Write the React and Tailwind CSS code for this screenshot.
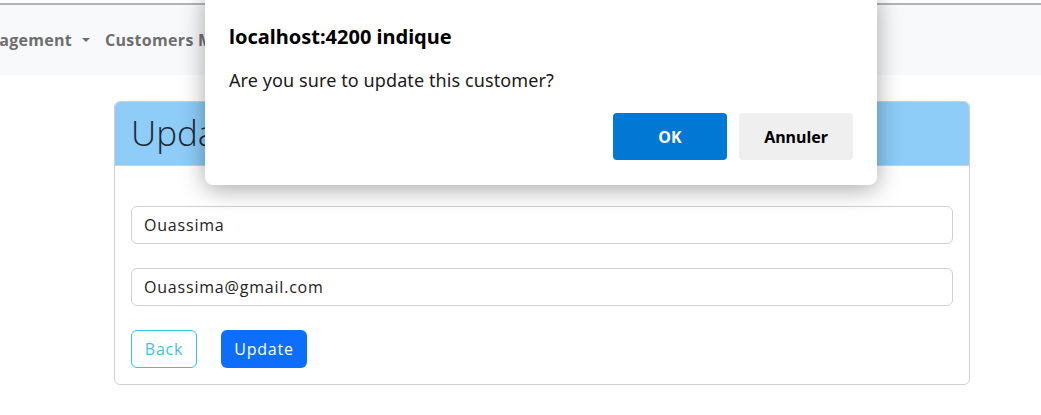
export default function App() {
  return (
    <div className="relative w-[1041px] h-[415px] overflow-hidden bg-white font-['Liberation_Sans',sans-serif]">
      {/* navbar */}
      <div className="mt-[3px] border-t-2 border-[#b4b4b4] bg-[#f8f9fa] h-[72px] flex items-center">
        <div className="flex items-center gap-[15px] -ml-[37px] font-bold text-[16px] text-[#6e6e6e] font-['Open_Sans',sans-serif] tracking-[0.3px]">
          <span className="flex items-center gap-[10px]">
            Management
            <span className="w-0 h-0 border-l-[4px] border-r-[4px] border-t-[4px] border-l-transparent border-r-transparent border-t-[#6e6e6e]" />
          </span>
          <span>Customers Management</span>
        </div>
      </div>

      {/* card */}
      <div className="mx-[114px] mt-[26px] w-[856px] border border-[#d0d0d0] rounded-md overflow-hidden">
        <div className="h-[64px] bg-[#8dcdf8] border-b border-[#d0d0d0] flex items-center px-4 text-[35px] text-[#1a2838] font-['Open_Sans',sans-serif] font-light">
          Update Customer
        </div>
        <div className="px-4 pt-10 pb-4 flex flex-col font-['Open_Sans',sans-serif] text-[16px] tracking-[0.8px]">
          <div className="h-[38px] border border-[#d0d0d0] rounded-md flex items-center px-3 text-[#222]">
            Ouassima
          </div>
          <div className="h-[38px] mt-[24px] border border-[#d0d0d0] rounded-md flex items-center px-3 text-[#222]">
            Ouassima@gmail.com
          </div>
          <div className="flex gap-6 mt-[24px]">
            <button className="h-[38px] w-[66px] border border-[#33c3dc] text-[#45c0dc] rounded-md">Back</button>
            <button className="h-[38px] w-[86px] bg-[#0d6efd] text-white rounded-md">Update</button>
          </div>
        </div>
      </div>

      {/* alert dialog */}
      <div className="absolute left-[205px] top-[-8px] w-[672px] h-[193px] bg-white rounded-lg shadow-[0_4px_24px_rgba(0,0,0,0.35)] px-6 pt-[32px] font-['Noto_Sans',sans-serif]">
        <div className="text-[20px] font-bold text-black leading-[26px]">localhost:4200 indique</div>
        <div className="mt-[17px] text-[18px] text-[#1a1a1a] leading-[26px] tracking-[0.1px]">Are you sure to update this customer?</div>
        <div className="flex justify-end gap-3 mt-[20px]">
          <button className="w-[114px] h-[47px] bg-[#0078d4] text-white font-bold text-[16px] rounded-sm">OK</button>
          <button className="w-[114px] h-[47px] bg-[#efefef] text-black font-bold text-[16px] rounded-sm">Annuler</button>
        </div>
      </div>
    </div>
  )
}
